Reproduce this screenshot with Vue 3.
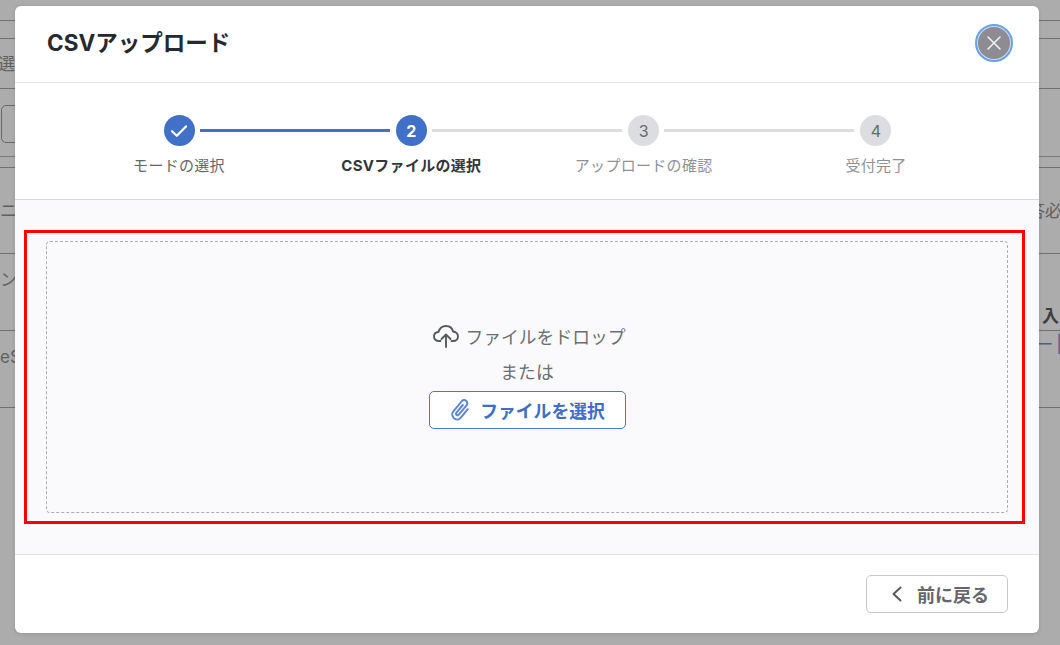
<script setup>
const steps = [
  { n: 1, label: 'モードの選択', state: 'done' },
  { n: 2, label: 'CSVファイルの選択', state: 'active' },
  { n: 3, label: 'アップロードの確認', state: 'todo' },
  { n: 4, label: '受付完了', state: 'todo' },
]
</script>

<template>
  <div class="page">
    <div class="bg">
      <div class="bg-row r1"></div>
      <div class="bg-row r2"></div>
      <div class="bg-row r3"><span>選</span></div>
      <div class="bg-row r4"><div class="bg-btn"></div></div>
      <div class="bg-row r5"></div>
      <div class="bg-row r6"><span>ニ</span><span>答必</span></div>
      <div class="bg-row r7"><span class="up">ン</span><span class="strong">入</span></div>
      <div class="bg-row r8"><span class="up">eS</span><span class="link">— |</span></div>
    </div>
    <div class="overlay">
      <section class="modal">
        <header class="head">
          <h1>CSVアップロード</h1>
          <button class="close" aria-label="閉じる">
            <svg width="16" height="16" viewBox="0 0 16 16" fill="none" stroke="#f4f4f6" stroke-width="1.5" stroke-linecap="round"><path d="M2 2l12 12M14 2L2 14"/></svg>
          </button>
        </header>
        <div class="stepwrap">
          <div class="stepper">
            <template v-for="(s, i) in steps" :key="s.n">
              <div class="step" :class="s.state">
                <div class="dot">
                  <svg v-if="s.state === 'done'" width="18" height="14" viewBox="0 0 18 14" fill="none" stroke="#fff" stroke-width="2.2" stroke-linecap="round" stroke-linejoin="round"><path d="M2 7.2l4.8 4.6L16 2.4"/></svg>
                  <template v-else>{{ s.n }}</template>
                </div>
                <div class="label">{{ s.label }}</div>
              </div>
              <div v-if="i < steps.length - 1" class="conn" :class="{ on: s.state === 'done' }"></div>
            </template>
          </div>
        </div>
        <div class="body">
          <div class="redbox">
            <div class="drop">
              <div class="drop-line">
                <svg width="26" height="23" viewBox="0 0 26 23" fill="none" stroke="#555a60" stroke-width="1.9" stroke-linecap="round" stroke-linejoin="round"><path d="M7.5 16H6C3 16 1 14 1 11.5 1 9 3 7.2 5.5 7 6.5 3.5 9.5 1 13 1c3.500 0 6.300 2.300 7 5.500 3 .3 5 2.500 5 5 0 2.500-2 4.500-5 4.500h-1.500"/><path d="M13 22V9.500M8.500 14l4.500-4.500 4.500 4.500"/></svg>
                <span>ファイルをドロップ</span>
              </div>
              <div class="or">または</div>
              <button class="pick">
                <svg width="18" height="22" viewBox="0 0 18 22" fill="none" stroke="#5c86d4" stroke-width="2" stroke-linecap="round" stroke-linejoin="round"><path d="M11.800 6 5.300 13.800C4.600 14.700 5 15.600 5.600 16c.7.500 1.600.4 2.200-.3l7.800-9.400c1.200-1.500 1-3.400-.5-4.500-1.400-1-3.400-.8-4.600.7l-8.100 9.800C.6 14.500 1 17.500 3 19.300c2 1.700 5 1.500 6.800-.6l7-8.500"/></svg>
                <span>ファイルを選択</span>
              </button>
            </div>
          </div>
        </div>
        <footer class="foot">
          <button class="back">
            <svg width="14" height="18" viewBox="0 0 14 18" fill="none" stroke="#55595f" stroke-width="2" stroke-linecap="round" stroke-linejoin="round"><path d="M10.500 2.500 3.500 9l7 6.500"/></svg>
            <span>前に戻る</span>
          </button>
        </footer>
      </section>
    </div>
  </div>
</template>

<style>
html, body { margin: 0; padding: 0; background: #fff; }
</style>

<style scoped>
.page {
  position: relative;
  width: 1060px;
  height: 645px;
  overflow: hidden;
  font-family: Inter, "Noto Sans CJK JP", sans-serif;
  color: #333;
}
.bg { display: flex; flex-direction: column; }
.bg-row {
  display: flex;
  justify-content: space-between;
  align-items: center;
  box-sizing: border-box;
  border-bottom: 1px solid #888;
  font-size: 17px;
  line-height: 22px;
  color: #666;
}
.r1 { height: 21px; }
.r2 { height: 18px; }
.r3 { height: 50px; margin-left: -2px; }
.r4 { height: 68px; border-bottom-color: #999; align-items: flex-start; padding-top: 16px; }
.r5 { height: 11px; }
.r6 { height: 86px; }
.r7 { height: 77px; }
.r8 { height: 77px; }
.bg-btn { width: 20px; height: 38px; margin-left: 1px; border: 1px solid #777; border-radius: 5px; box-sizing: border-box; }
.up { margin-bottom: 24px; }
.strong { font-weight: 700; color: #222; margin-right: 1px; margin-top: 48px; }
.link { color: #3a62b4; margin-right: -2px; margin-bottom: 50px; }
.r6 span:last-child { margin-right: -2px; }
.overlay {
  position: absolute;
  inset: 0;
  background: rgba(90, 90, 92, 0.5);
  padding: 6px 21px 12px 15px;
  box-sizing: border-box;
}
.modal {
  height: 627px;
  background: #fff;
  border-radius: 6px;
  display: flex;
  flex-direction: column;
  overflow: hidden;
  box-shadow: 0 1px 4px rgba(0, 0, 0, 0.12);
}
.head {
  height: 77px;
  flex: none;
  box-sizing: border-box;
  border-bottom: 1.5px solid #e6e6e8;
  display: flex;
  align-items: center;
  justify-content: space-between;
  padding: 0 27.5px 3px 32px;
}
.head h1 {
  margin: 0;
  font-size: 22.5px;
  line-height: 28px;
  font-weight: 700;
  color: #26292d;
}
.close {
  width: 36px;
  height: 36px;
  padding: 0;
  border-radius: 50%;
  background: #8c8c92;
  border: 2px solid #d8d8dc;
  outline: 2px solid #64a2f4;
  outline-offset: -1px;
  display: flex;
  align-items: center;
  justify-content: center;
  box-sizing: border-box;
}
.stepwrap {
  height: 117px;
  flex: none;
  box-sizing: border-box;
  border-bottom: 1.5px solid #d8d8da;
  padding: 32px 0 0 1px;
}
.stepper {
  width: 728px;
  margin: 0 auto;
  display: flex;
}
.step {
  width: 31px;
  flex: none;
  display: flex;
  flex-direction: column;
  align-items: center;
}
.dot {
  width: 31px;
  height: 31px;
  border-radius: 50%;
  display: flex;
  align-items: center;
  justify-content: center;
  font-size: 16px;
  background: #dcdde0;
  color: #66696e;
  flex: none;
}
.done .dot, .active .dot { background: #4070c8; color: #fff; font-weight: 700; }
.label {
  margin-top: 9px;
  font-size: 15px;
  line-height: 22px;
  white-space: nowrap;
  color: #8e9196;
  letter-spacing: 0.3px;
}
.done .label { color: #63666b; }
.active .label { color: #33363a; font-weight: 700; }
.conn {
  flex: 1;
  height: 3px;
  margin: 14px 6px 0 5px;
  background: #dcdde1;
}
.conn.on { background: #4070c8; }
.body {
  flex: 1;
  background: #fafafc;
  padding: 30px 14px 30px 9px;
  display: flex;
  border-bottom: 1.5px solid #e4e4e6;
}
.redbox {
  flex: 1;
  border: 3px solid #f00;
  padding: 8px 14px 8px 19px;
  display: flex;
}
.drop {
  flex: 1;
  border: 1px dashed #acaeb3;
  border-radius: 4px;
  display: flex;
  flex-direction: column;
  align-items: center;
  padding-top: 81px;
  font-size: 17.8px;
  color: #6b6e73;
}
.drop-line {
  display: flex;
  align-items: center;
  gap: 6px;
  height: 26px;
  padding-left: 5px;
}
.or { margin-top: 11px; line-height: 26px; }
.pick {
  margin-top: 5px;
  width: 197px;
  height: 38px;
  padding: 0 0 0 2px;
  background: #fff;
  border: 1px solid #4a78cc;
  border-radius: 5px;
  display: flex;
  align-items: center;
  justify-content: center;
  gap: 11px;
  font: inherit;
  font-weight: 700;
  color: #3f6ec8;
}
.foot {
  height: 78px;
  flex: none;
  display: flex;
  align-items: center;
  justify-content: flex-end;
  padding: 0 30.7px 0 0;
}
.back {
  width: 142.500px;
  height: 38px;
  padding: 0 0 0 5px;
  background: #fff;
  border: 1.5px solid #c8c9cc;
  border-radius: 5px;
  display: flex;
  align-items: center;
  justify-content: center;
  gap: 13px;
  font: inherit;
  font-size: 18px;
  font-weight: 700;
  color: #63666b;
}
</style>
